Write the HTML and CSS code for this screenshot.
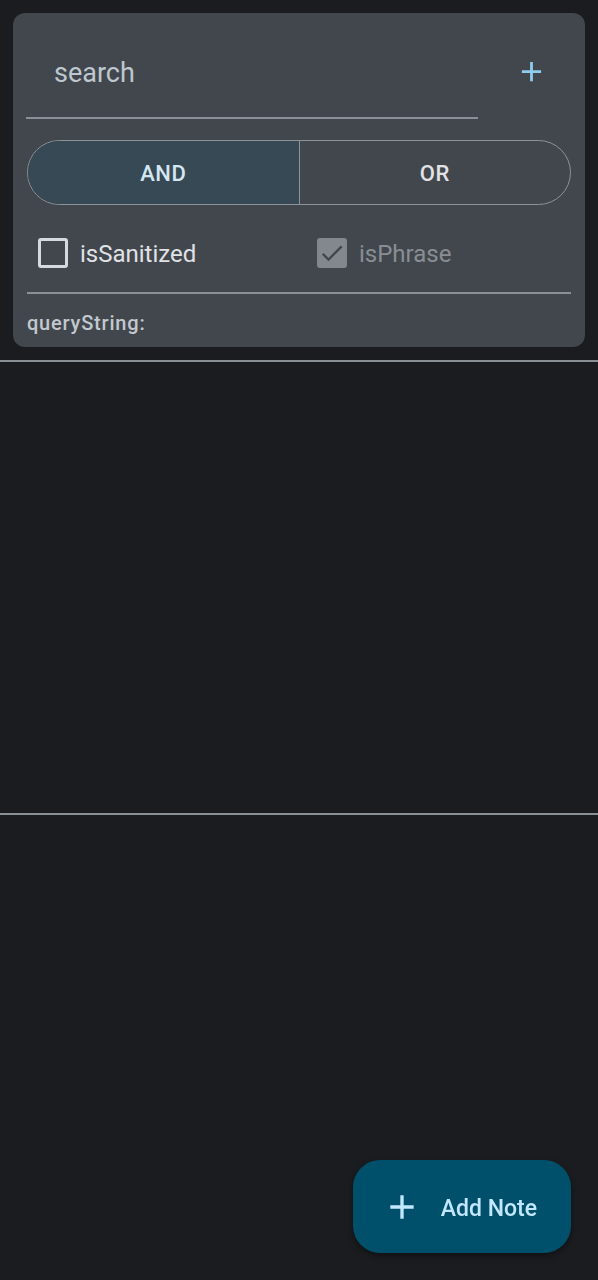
FILE: index.html
```html
<!DOCTYPE html>
<html>
  <head>
    <title>Notes</title>
    <link rel="stylesheet" href="styles.css">
  </head>
  <body>
    <div class="card">
      <div class="search-row">
        <div class="field"><span class="hint">search</span></div>
        <div class="icon-btn">
          <svg viewBox="0 0 24 24" width="33" height="33"><path d="M19 13h-6v6h-2v-6H5v-2h6V5h2v6h6v2z" fill="#8fcdf0"/></svg>
        </div>
      </div>
      <div class="segmented">
        <div class="seg selected">AND</div>
        <div class="seg">OR</div>
      </div>
      <div class="checks">
        <div class="check">
          <span class="box"></span>
          <span class="label">isSanitized</span>
        </div>
        <div class="check disabled">
          <span class="box checked">
            <svg viewBox="0 0 24 24" width="28" height="28"><path d="M9 16.2L4.8 12l-1.4 1.4L9 19 21 7l-1.4-1.4L9 16.2z" fill="#41474d"/></svg>
          </span>
          <span class="label">isPhrase</span>
        </div>
      </div>
      <div class="rule"></div>
      <p class="query">queryString:</p>
    </div>
    <div class="list"></div>

    <div class="fab">
      <svg viewBox="0 0 24 24" width="40" height="40"><path d="M19 13h-6v6h-2v-6H5v-2h6V5h2v6h6v2z" fill="#c2e8ff"/></svg>
      <span>Add Note</span>
    </div>
  </body>
</html>
```

FILE: styles.css
```css
body {
  margin: 0;
  background-color: #1a1c1f;
  font-family: Roboto, "Noto Sans", sans-serif;
  height: 1280px;
}

div.card {
  margin: 13px 13px 0 13px;
  background-color: #41474d;
  border-radius: 12px;
  padding: 12px 14px 12px 14px;
  height: 334px;
  box-sizing: border-box;
}

div.search-row {
  display: flex;
  align-items: center;
}

div.field {
  width: 452px;
  height: 94px;
  margin-left: -1px;
  box-sizing: border-box;
  border-bottom: 2px solid #8a9097;
  padding-left: 28px;
  display: flex;
  align-items: center;
}

span.hint {
  color: #bfc7cf;
  font-size: 27px;
  padding-top: 4px;
}

div.icon-btn {
  width: 48px;
  height: 48px;
  margin-left: auto;
  margin-right: 16px;
  margin-bottom: 2px;
  display: flex;
  align-items: center;
  justify-content: center;
}

div.segmented {
  margin-top: 21px;
  height: 65px;
  display: flex;
  border: 1.5px solid #8b9298;
  border-radius: 33px;
  overflow: hidden;
  box-sizing: border-box;
}

div.seg {
  flex: 1;
  display: flex;
  align-items: center;
  justify-content: center;
  padding-top: 2px;
  font-size: 22px;
  font-weight: 500;
  letter-spacing: 0.5px;
  color: #e2e2e6;
}

div.seg.selected {
  background-color: #364955;
  color: #d4e6f2;
  border-right: 1.5px solid #8b9298;
}

div.checks {
  margin-top: 16px;
  height: 64px;
  display: grid;
  grid-template-columns: 279px 1fr;
  padding-left: 11px;
  align-items: center;
}

div.check {
  display: flex;
  align-items: center;
}

span.box {
  width: 30px;
  height: 30px;
  box-sizing: border-box;
  border: 3px solid #d6dade;
  border-radius: 3px;
  margin-right: 12px;
  display: flex;
  align-items: center;
  justify-content: center;
}

span.box.checked {
  border: none;
  background-color: #82888e;
}

span.label {
  font-size: 24px;
  color: #e1e2e5;
  padding-top: 1px;
}

div.check.disabled span.label {
  color: #898e94;
}

div.rule {
  margin-top: 7px;
  height: 1.5px;
  background-color: #8a9096;
}

p.query {
  margin: 17px 0 0 0;
  font-size: 20px;
  line-height: 24px;
  font-weight: 500;
  letter-spacing: 0.8px;
  color: #c3c8ce;
}

div.list {
  margin-top: 13px;
  height: 451px;
  border-top: 2px solid #8a8f95;
  border-bottom: 2px solid #8a8f95;
}

div.fab {
  position: fixed;
  right: 27px;
  bottom: 27px;
  height: 93px;
  padding: 0 34px 0 29px;
  border-radius: 27px;
  background-color: #004f6b;
  display: flex;
  align-items: center;
  gap: 19px;
  box-shadow: 0 3px 6px rgba(0, 0, 0, 0.4);
}

div.fab span {
  font-size: 23px;
  font-weight: 500;
  color: #c2e8ff;
  padding-top: 3px;
}
```
